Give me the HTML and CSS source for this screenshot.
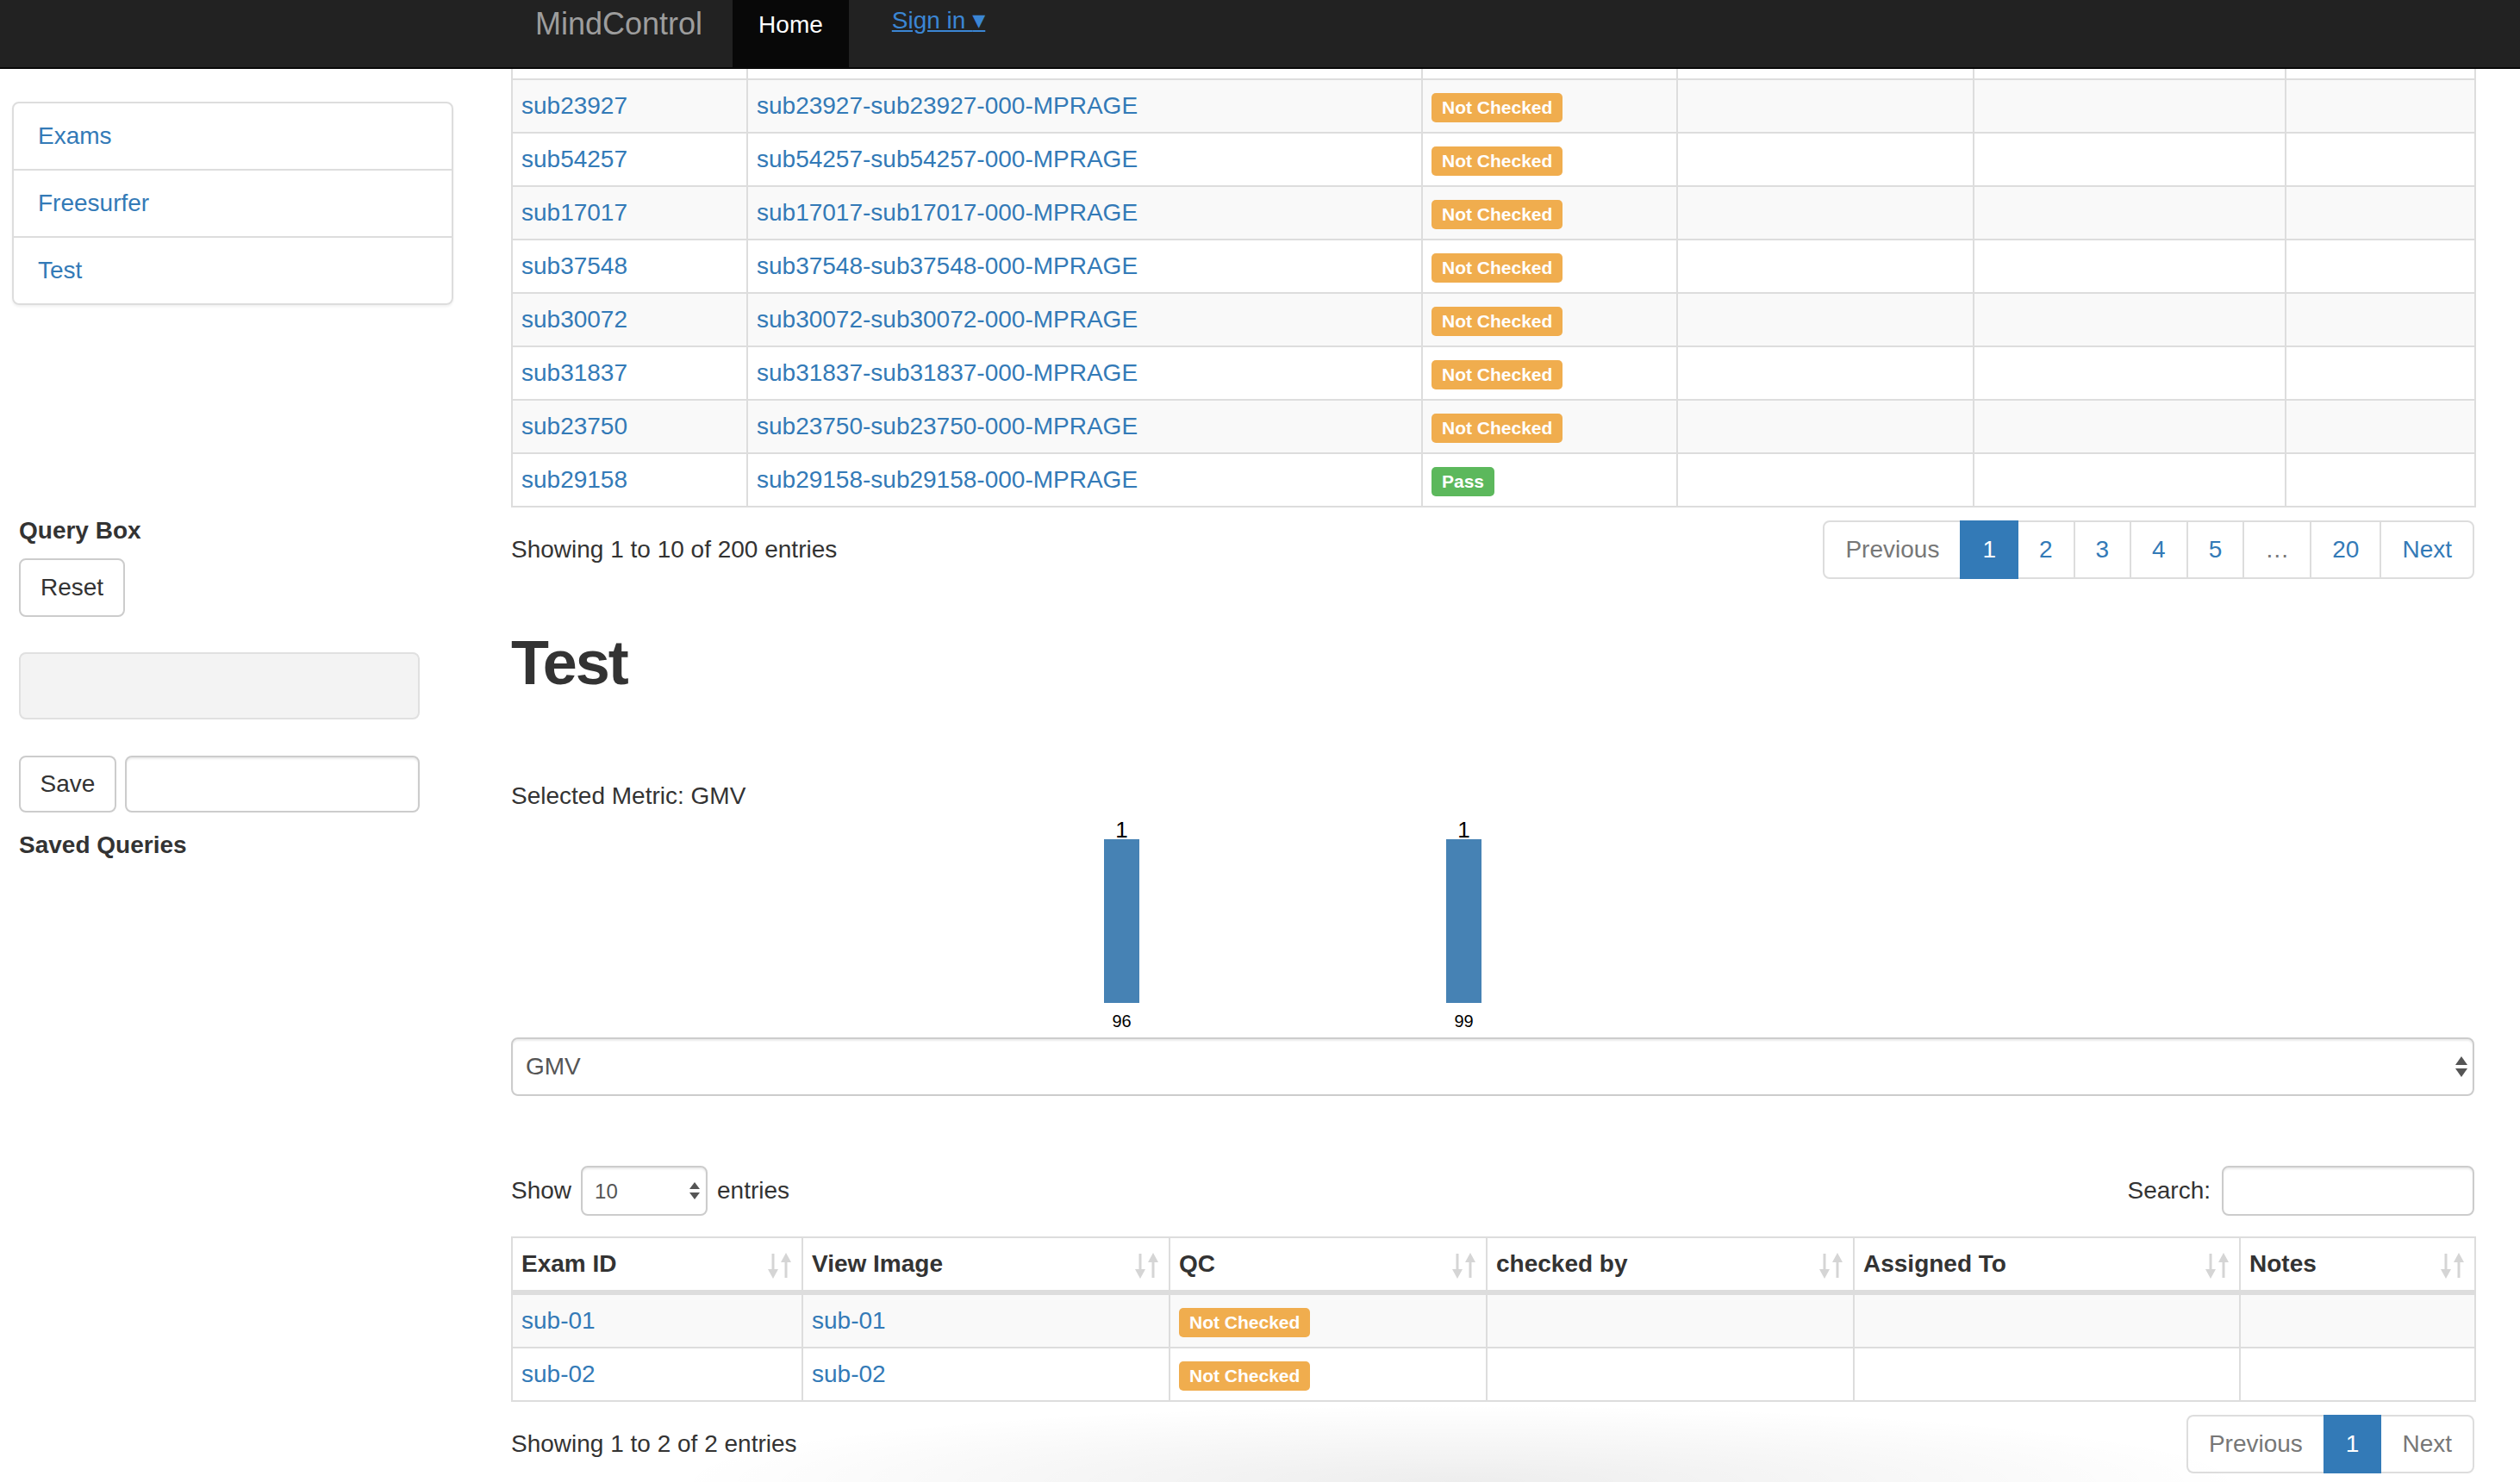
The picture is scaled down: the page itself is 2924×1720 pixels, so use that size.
FILE: index.html
```html
<!DOCTYPE html>
<html lang="en">
<head>
<meta charset="utf-8">
<title>MindControl</title>
<link rel="stylesheet" href="styles.css">
</head>
<body>
<nav class="navbar">
  <a class="brand" href="#">MindControl</a>
  <ul class="nav">
    <li class="nav-active"><a href="#">Home</a></li>
  </ul>
  <a class="signin" href="#">Sign in <span class="caret">▾</span></a>
</nav>

<div class="page">
  <aside class="sidebar">
    <div class="list-group">
      <a class="lg-item" href="#">Exams</a>
      <a class="lg-item" href="#">Freesurfer</a>
      <a class="lg-item" href="#">Test</a>
    </div>
    <div class="query">
      <div class="q-title">Query Box</div>
      <button class="btn btn-reset">Reset</button>
      <div class="q-field"></div>
      <div class="save-row">
        <button class="btn btn-save">Save</button>
        <input class="form-input save-input" type="text">
      </div>
      <div class="q-title q-saved">Saved Queries</div>
    </div>
  </aside>

  <main class="content">
    <table class="dtable t-top">
      <colgroup>
        <col style="width:273px"><col style="width:783px"><col style="width:296px"><col style="width:344px"><col style="width:362px"><col style="width:220px">
      </colgroup>
      <tbody>
        <tr class="cut"><td></td><td></td><td></td><td></td><td></td><td></td></tr>
        <tr><td><a href="#">sub23927</a></td><td><a href="#">sub23927-sub23927-000-MPRAGE</a></td><td><span class="label warn">Not Checked</span></td><td></td><td></td><td></td></tr>
        <tr><td><a href="#">sub54257</a></td><td><a href="#">sub54257-sub54257-000-MPRAGE</a></td><td><span class="label warn">Not Checked</span></td><td></td><td></td><td></td></tr>
        <tr><td><a href="#">sub17017</a></td><td><a href="#">sub17017-sub17017-000-MPRAGE</a></td><td><span class="label warn">Not Checked</span></td><td></td><td></td><td></td></tr>
        <tr><td><a href="#">sub37548</a></td><td><a href="#">sub37548-sub37548-000-MPRAGE</a></td><td><span class="label warn">Not Checked</span></td><td></td><td></td><td></td></tr>
        <tr><td><a href="#">sub30072</a></td><td><a href="#">sub30072-sub30072-000-MPRAGE</a></td><td><span class="label warn">Not Checked</span></td><td></td><td></td><td></td></tr>
        <tr><td><a href="#">sub31837</a></td><td><a href="#">sub31837-sub31837-000-MPRAGE</a></td><td><span class="label warn">Not Checked</span></td><td></td><td></td><td></td></tr>
        <tr><td><a href="#">sub23750</a></td><td><a href="#">sub23750-sub23750-000-MPRAGE</a></td><td><span class="label warn">Not Checked</span></td><td></td><td></td><td></td></tr>
        <tr><td><a href="#">sub29158</a></td><td><a href="#">sub29158-sub29158-000-MPRAGE</a></td><td><span class="label pass">Pass</span></td><td></td><td></td><td></td></tr>
      </tbody>
    </table>

    <div class="info-row">
      <div class="info">Showing 1 to 10 of 200 entries</div>
      <ul class="pagination">
        <li class="disabled"><span>Previous</span></li>
        <li class="active"><span>1</span></li>
        <li><a href="#">2</a></li>
        <li><a href="#">3</a></li>
        <li><a href="#">4</a></li>
        <li><a href="#">5</a></li>
        <li class="disabled"><span>…</span></li>
        <li><a href="#">20</a></li>
        <li><a href="#">Next</a></li>
      </ul>
    </div>

    <h1 class="title">Test</h1>
    <div class="metric">Selected Metric: GMV</div>

    <svg class="chart" width="2278" height="260" viewBox="0 0 2278 260">
      <rect x="688" y="30" width="41" height="190" fill="#4682b4"></rect>
      <rect x="1085" y="30" width="41" height="190" fill="#4682b4"></rect>
      <text class="bar-val" x="708.5" y="28" text-anchor="middle">1</text>
      <text class="bar-val" x="1105.5" y="28" text-anchor="middle">1</text>
      <text class="bar-axis" x="708.5" y="248" text-anchor="middle">96</text>
      <text class="bar-axis" x="1105.5" y="248" text-anchor="middle">99</text>
    </svg>

    <div class="select-wrap">
      <select class="metric-select"><option>GMV</option></select>
      <svg class="sel-arrows big" width="14" height="26" viewBox="0 0 14 26"><polygon points="7,0 14,10 0,10" fill="#555"/><polygon points="0,14 14,14 7,24" fill="#555"/></svg>
    </div>

    <div class="dt-top">
      <label class="dt-length">Show
        <span class="len-wrap">
          <select class="len-select"><option>10</option></select>
          <svg class="sel-arrows small" width="12" height="20" viewBox="0 0 12 20"><polygon points="6,0 12,8 0,8" fill="#555"/><polygon points="0,12 12,12 6,20" fill="#555"/></svg>
        </span>
        entries</label>
      <label class="dt-search">Search: <input class="form-input search-input" type="search"></label>
    </div>

    <table class="dtable t-bottom">
      <colgroup>
        <col style="width:337px"><col style="width:426px"><col style="width:368px"><col style="width:426px"><col style="width:448px"><col style="width:273px">
      </colgroup>
      <thead>
        <tr>
          <th>Exam ID<svg class="sort" width="29" height="30" viewBox="0 0 29 30"><rect x="5.5" y="1" width="3" height="21" fill="#d5d5d5"/><polygon points="1,19 13,19 7,30" fill="#d5d5d5"/><polygon points="16,11 28,11 22,0" fill="#d5d5d5"/><rect x="20.5" y="8" width="3" height="21" fill="#d5d5d5"/></svg></th>
          <th>View Image<svg class="sort" width="29" height="30" viewBox="0 0 29 30"><rect x="5.5" y="1" width="3" height="21" fill="#d5d5d5"/><polygon points="1,19 13,19 7,30" fill="#d5d5d5"/><polygon points="16,11 28,11 22,0" fill="#d5d5d5"/><rect x="20.5" y="8" width="3" height="21" fill="#d5d5d5"/></svg></th>
          <th>QC<svg class="sort" width="29" height="30" viewBox="0 0 29 30"><rect x="5.5" y="1" width="3" height="21" fill="#d5d5d5"/><polygon points="1,19 13,19 7,30" fill="#d5d5d5"/><polygon points="16,11 28,11 22,0" fill="#d5d5d5"/><rect x="20.5" y="8" width="3" height="21" fill="#d5d5d5"/></svg></th>
          <th>checked by<svg class="sort" width="29" height="30" viewBox="0 0 29 30"><rect x="5.5" y="1" width="3" height="21" fill="#d5d5d5"/><polygon points="1,19 13,19 7,30" fill="#d5d5d5"/><polygon points="16,11 28,11 22,0" fill="#d5d5d5"/><rect x="20.5" y="8" width="3" height="21" fill="#d5d5d5"/></svg></th>
          <th>Assigned To<svg class="sort" width="29" height="30" viewBox="0 0 29 30"><rect x="5.5" y="1" width="3" height="21" fill="#d5d5d5"/><polygon points="1,19 13,19 7,30" fill="#d5d5d5"/><polygon points="16,11 28,11 22,0" fill="#d5d5d5"/><rect x="20.5" y="8" width="3" height="21" fill="#d5d5d5"/></svg></th>
          <th>Notes<svg class="sort" width="29" height="30" viewBox="0 0 29 30"><rect x="5.5" y="1" width="3" height="21" fill="#d5d5d5"/><polygon points="1,19 13,19 7,30" fill="#d5d5d5"/><polygon points="16,11 28,11 22,0" fill="#d5d5d5"/><rect x="20.5" y="8" width="3" height="21" fill="#d5d5d5"/></svg></th>
        </tr>
      </thead>
      <tbody>
        <tr><td><a href="#">sub-01</a></td><td><a href="#">sub-01</a></td><td><span class="label warn">Not Checked</span></td><td></td><td></td><td></td></tr>
        <tr><td><a href="#">sub-02</a></td><td><a href="#">sub-02</a></td><td><span class="label warn">Not Checked</span></td><td></td><td></td><td></td></tr>
      </tbody>
    </table>

    <div class="info-row">
      <div class="info">Showing 1 to 2 of 2 entries</div>
      <ul class="pagination">
        <li class="disabled"><span>Previous</span></li>
        <li class="active"><span>1</span></li>
        <li class="disabled"><span>Next</span></li>
      </ul>
    </div>
  </main>
</div>
<div class="bottom-shadow"></div>
</body>
</html>
```

FILE: styles.css
```css
* { box-sizing: border-box; }
html, body { margin: 0; padding: 0; }
body {
  font-family: "Liberation Sans", Arial, Helvetica, sans-serif;
  font-size: 28px;
  line-height: 40px;
  color: #333;
  background: #fff;
  width: 2924px;
  height: 1720px;
  overflow: hidden;
  position: relative;
}
a { color: #337ab7; text-decoration: none; }

/* navbar */
.navbar {
  display: flex;
  align-items: flex-start;
  height: 80px;
  background: #222;
  border-bottom: 2px solid #080808;
}
.brand {
  margin-left: 621px;
  margin-top: 10px;
  font-size: 36px;
  line-height: 36px;
  color: #9d9d9d;
}
.nav {
  list-style: none;
  margin: 0 0 0 35px;
  padding: 0;
  display: flex;
}
.nav-active {
  background: #080808;
  height: 78px;
  padding: 15px 30px 0;
  line-height: 28px;
}
.nav-active a { color: #fff; }
.signin {
  margin-left: 50px;
  margin-top: 9px;
  line-height: 28px;
  color: #3b86d4;
  text-decoration: underline;
}
.caret { font-family: "DejaVu Sans", sans-serif; font-size: 30px; }

/* layout */
.page { display: flex; align-items: flex-start; }
.sidebar { width: 593px; flex: none; }
.content { width: 2278px; flex: none; }

/* sidebar */
.list-group {
  margin: 38px 0 0 14px;
  width: 512px;
  border: 2px solid #ddd;
  border-radius: 8px;
  box-shadow: 0 2px 3px rgba(0,0,0,.06);
  display: flex;
  flex-direction: column;
}
.lg-item {
  display: block;
  padding: 18px 28px;
  line-height: 40px;
}
.lg-item + .lg-item { border-top: 2px solid #ddd; }

.query { padding-left: 22px; width: 487px; }
.q-title { font-weight: bold; margin-top: 242px; }
.q-saved { margin-top: 18px; }
.btn {
  font: inherit;
  color: #333;
  background: #fff;
  border: 2px solid #ccc;
  border-radius: 8px;
  padding: 12px 24px;
  line-height: 40px;
  height: 68px;
}
.btn-reset { display: block; margin-top: 12px; width: 123px; padding: 0; }
.q-field {
  margin-top: 41px;
  height: 78px;
  background: #f3f3f3;
  border: 2px solid #e0e0e0;
  border-radius: 8px;
}
.save-row { display: flex; gap: 10px; margin-top: 42px; }
.btn-save { width: 113px; height: 66px; padding: 0; }
.form-input {
  font: inherit;
  border: 2px solid #ccc;
  border-radius: 8px;
  box-shadow: inset 0 2px 2px rgba(0,0,0,.075);
  background: #fff;
  padding: 0 16px;
}
.save-input { flex: 1; height: 66px; min-width: 0; }

/* tables */
.dtable {
  table-layout: fixed;
  border-collapse: separate;
  border-spacing: 0;
  width: 2278px;
  border-right: 2px solid #ddd;
  border-bottom: 2px solid #ddd;
}
.dtable td, .dtable th {
  border-left: 2px solid #ddd;
  border-top: 2px solid #ddd;
  padding: 10px 10px;
  line-height: 40px;
  text-align: left;
  vertical-align: middle;
  white-space: nowrap;
  overflow: hidden;
}
.t-top tr.cut td { border-top: 0; height: 11px; padding: 0; }
.t-top tbody tr:nth-child(even) { background: #f9f9f9; }
.t-bottom tbody tr:nth-child(odd) { background: #f9f9f9; }
.t-bottom th {
  position: relative;
  font-weight: bold;
  border-bottom: 4px solid #ddd;
  padding-bottom: 10px;
}
.sort { position: absolute; right: 11px; top: 17px; }

.label {
  display: inline-block;
  font-size: 21px;
  font-weight: bold;
  line-height: 21px;
  color: #fff;
  padding: 6px 12px 7px;
  border-radius: 5px;
  vertical-align: middle;
  position: relative;
  top: 0;
}
.warn { background: #f0ad4e; }
.pass { background: #5cb85c; }

/* info + pagination */
.info-row {
  display: flex;
  justify-content: space-between;
  align-items: center;
  margin-top: 15px;
}
.pagination { list-style: none; margin: 0; padding: 0; display: flex; }
.pagination li > a, .pagination li > span {
  display: block;
  padding: 12px 24px;
  line-height: 40px;
  border: 2px solid #ddd;
  margin-left: -2px;
  color: #337ab7;
  background: #fff;
}
.pagination li:first-child > * { margin-left: 0; border-radius: 8px 0 0 8px; }
.pagination li:last-child > * { border-radius: 0 8px 8px 0; }
.pagination li.disabled > span { color: #777; }
.pagination li.active > span { background: #337ab7; border-color: #337ab7; color: #fff; position: relative; z-index: 1; }

.title {
  margin: 57px 0 0;
  font-size: 72px;
  line-height: 80px;
  font-weight: bold;
  letter-spacing: -2px;
  color: #333;
}
.metric { margin-top: 95px; }
.chart { display: block; }
.bar-val { font-family: "Liberation Sans", Arial, sans-serif; font-size: 26px; fill: #000; }
.bar-axis { font-family: "Liberation Sans", Arial, sans-serif; font-size: 20px; fill: #000; }

.select-wrap { position: relative; height: 68px; }
.metric-select {
  appearance: none;
  -webkit-appearance: none;
  width: 100%;
  height: 68px;
  font: inherit;
  color: #555;
  border: 2px solid #ccc;
  border-radius: 8px;
  background: #fff;
  box-shadow: inset 0 2px 2px rgba(0,0,0,.075);
  padding: 0 15px;
}
.sel-arrows { position: absolute; pointer-events: none; }
.sel-arrows.big { right: 8px; top: 22px; }

.dt-top {
  display: flex;
  justify-content: space-between;
  align-items: center;
  margin-top: 81px;
  height: 58px;
}
.dt-length { display: flex; align-items: center; gap: 11px; }
.len-wrap { position: relative; display: block; height: 58px; }
.len-select {
  appearance: none;
  -webkit-appearance: none;
  width: 147px;
  height: 58px;
  font-family: inherit;
  font-size: 24px;
  color: #555;
  border: 2px solid #ccc;
  border-radius: 8px;
  background: #fff;
  box-shadow: inset 0 2px 2px rgba(0,0,0,.075);
  padding: 0 14px;
}
.sel-arrows.small { right: 9px; top: 19px; }
.dt-search { display: flex; align-items: center; gap: 13px; }
.search-input { width: 293px; height: 58px; }

.t-bottom { margin-top: 24px; }

/* faint shadow at the bottom edge of the window */
.bottom-shadow {
  position: absolute;
  left: 780px;
  bottom: 0;
  width: 1830px;
  height: 90px;
  pointer-events: none;
  background: radial-gradient(ellipse 50% 100% at 50% 100%, rgba(0,0,0,.07), rgba(0,0,0,0) 100%);
}
```
